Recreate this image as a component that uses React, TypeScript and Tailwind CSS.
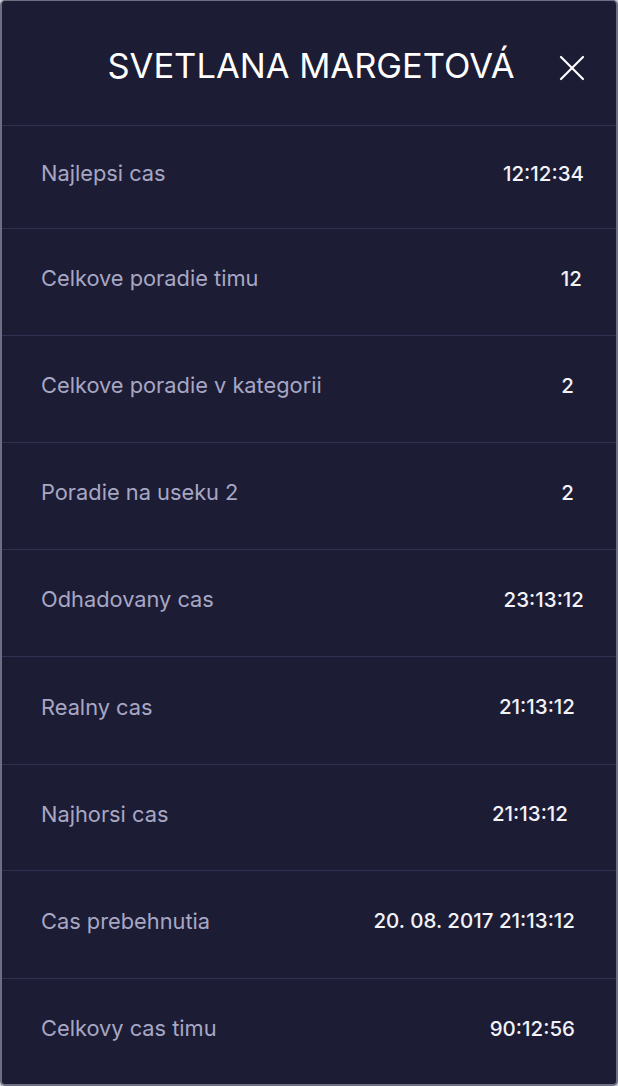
import React from "react";

type Row = { label: string; value: string; pr: string };

const rows: Row[] = [
  { label: "Najlepsi cas", value: "12:12:34", pr: "pr-[32px]" },
  { label: "Celkove poradie timu", value: "12", pr: "pr-[34px]" },
  { label: "Celkove poradie v kategorii", value: "2", pr: "pr-[42px]" },
  { label: "Poradie na useku 2", value: "2", pr: "pr-[42px]" },
  { label: "Odhadovany cas", value: "23:13:12", pr: "pr-[32px]" },
  { label: "Realny cas", value: "21:13:12", pr: "pr-[41px]" },
  { label: "Najhorsi cas", value: "21:13:12", pr: "pr-[48px]" },
  { label: "Cas prebehnutia", value: "20. 08. 2017 21:13:12", pr: "pr-[41px]" },
  { label: "Celkovy cas timu", value: "90:12:56", pr: "pr-[41px]" },
];

const heights = [
  "h-[103px]",
  "h-[107px]",
  "h-[107px]",
  "h-[107px]",
  "h-[107px]",
  "h-[108px]",
  "h-[106px]",
  "h-[108px]",
  "h-[106px]",
];

export default function App() {
  return (
    <div className="w-[618px] h-[1086px] bg-[#c9c9d2]" style={{ fontFamily: "Inter, 'Noto Sans', sans-serif" }}>
      <div className="w-full h-full bg-[#1c1c34] border-t border-l-2 border-r-2 border-b-2 border-[#6f6f84] rounded-[5px] overflow-hidden flex flex-col">
        <div className="h-[125px] flex items-center justify-center relative border-b border-[#303050] shrink-0">
          <h1 className="text-white text-[34.5px] font-normal leading-none mt-[6px] ml-[4px]">
            SVETLANA MARGETOVÁ
          </h1>
          <button className="absolute right-[30px] top-[53px] w-[28px] h-[28px] flex items-center justify-center">
            <svg width="26" height="26" viewBox="0 0 26 26" fill="none" stroke="#ffffff" strokeWidth="2.2" strokeLinecap="round">
              <path d="M2 2 L24 24" />
              <path d="M24 2 L2 24" />
            </svg>
          </button>
        </div>
        {rows.map((r, i) => (
          <div
            key={r.label}
            className={`${heights[i]} shrink-0 flex items-center justify-between pl-[39px] ${r.pr} pb-[6px] ${
              i < rows.length - 1 ? "border-b border-[#303050]" : ""
            }`}
          >
            <span className="text-[#a7a7c4] text-[21.8px] leading-none">{r.label}</span>
            <span className="text-[#f2f2f7] text-[20.5px] font-medium leading-none">{r.value}</span>
          </div>
        ))}
      </div>
    </div>
  );
}
